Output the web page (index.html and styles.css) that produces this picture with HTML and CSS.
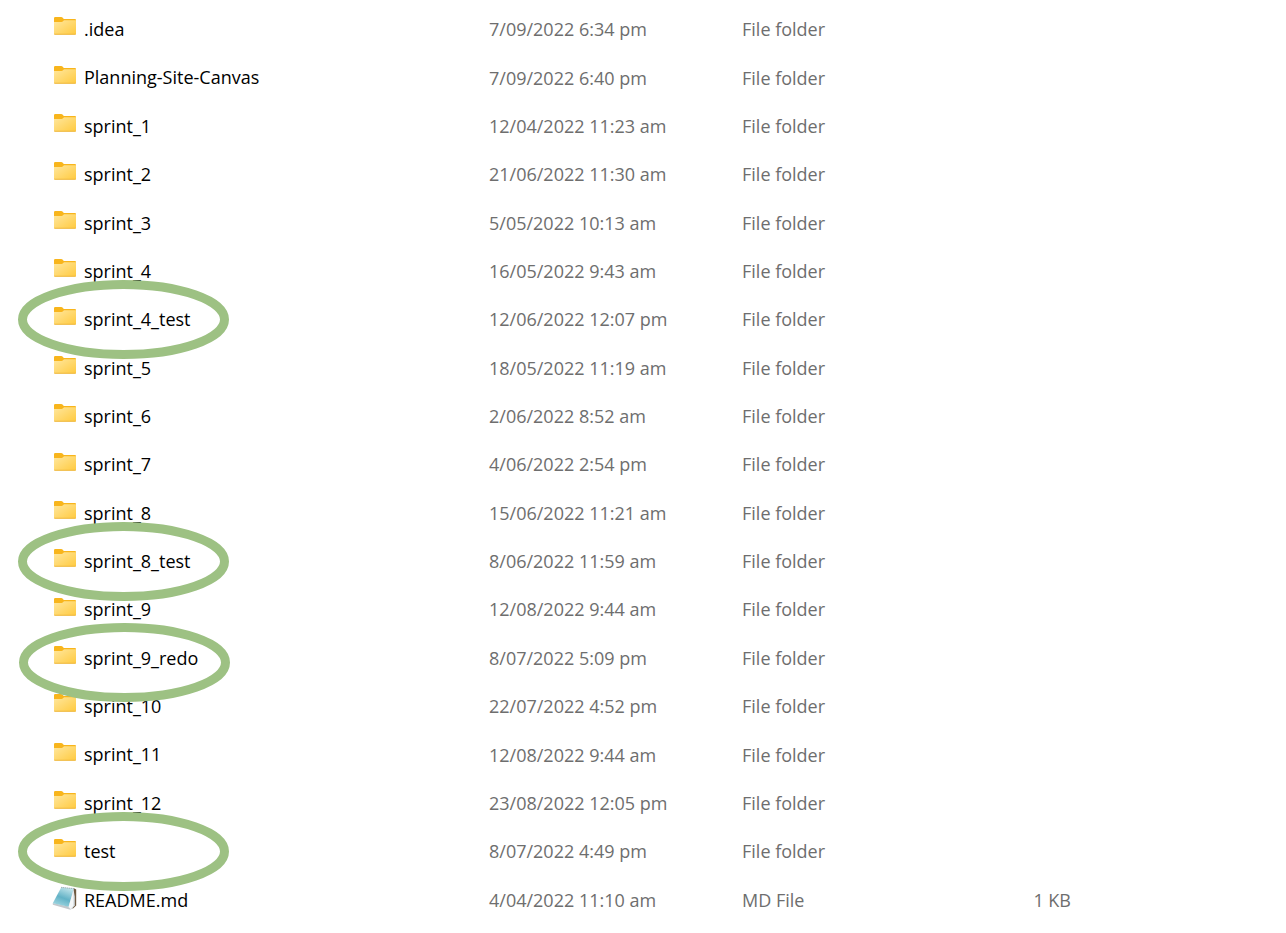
FILE: index.html
```html
<!DOCTYPE html>
<html lang="en">
<head>
<meta charset="utf-8">
<title>Files</title>
<link rel="stylesheet" href="styles.css">
</head>
<body>
<svg class="defs" aria-hidden="true">
  <defs>
    <linearGradient id="folder-front" x1="0" y1="0" x2="1" y2="1">
      <stop offset="0" stop-color="#ffe79e"/>
      <stop offset="1" stop-color="#ffca3f"/>
    </linearGradient>
    <linearGradient id="note-page" x1="0.7" y1="0" x2="0.3" y2="1">
      <stop offset="0" stop-color="#c4e6ec"/>
      <stop offset="0.55" stop-color="#62b2c6"/>
      <stop offset="1" stop-color="#a3d8e2"/>
    </linearGradient>
    <symbol id="folder" viewBox="0 0 24 24">
      <path d="M1 4.2Q1 3 2.2 3H8.3Q9 3 9.5 3.6L10.8 5H22Q23 5 23 6V12H1Z" fill="#f8b51c"/>
      <path d="M1 8H8.6Q9.4 8 10 7.3L11 6.2H23V19.8Q23 20.6 22.2 20.6H1.8Q1 20.6 1 19.8Z" fill="url(#folder-front)"/>
      <path d="M1 19.8H23Q23 20.8 22 20.8H2Q1 20.8 1 19.8Z" fill="#eeb63c"/>
    </symbol>
    <symbol id="note" viewBox="0 0 26 26">
      <path d="M21.5 3L24.2 4.5V20.5L20.5 24Z" fill="#6f5a41"/>
      <path d="M0.8 18L17 21.5L19 24.4L17.5 24.6L0.8 19.8Z" fill="#c3c8cc"/>
      <path d="M21.5 4.5L22.8 11.5V20.5L19 24.4L15.6 21.8Z" fill="#cfd6da"/>
      <path d="M9.3 2.2L21.8 3.4L16.6 21.8L0.8 18.2Z" fill="url(#note-page)"/>
      <path d="M21.6 5L21.4 21L18.6 24L16.6 21.8Z" fill="#f4f7f8"/>
      <path d="M9.3 2.4L21.8 3.6" stroke="#8c9da3" stroke-width="1" stroke-dasharray="1 1"/>
    </symbol>
    <symbol id="ring" viewBox="0 0 211 79">
      <ellipse cx="105.5" cy="39.5" rx="101" ry="35" fill="none" stroke="#9dc183" stroke-width="9"/>
    </symbol>
  </defs>
</svg>
<main class="explorer">
<table class="files" aria-label="Files">
  <colgroup><col class="col-name"><col class="col-date"><col class="col-type"><col class="col-size"><col></colgroup>
  <tbody>
    <tr><td class="name"><svg class="icon"><use href="#folder"/></svg>.idea</td><td>7/09/2022 6:34 pm</td><td>File folder</td><td class="size"></td><td></td></tr>
    <tr><td class="name"><svg class="icon"><use href="#folder"/></svg>Planning-Site-Canvas</td><td>7/09/2022 6:40 pm</td><td>File folder</td><td class="size"></td><td></td></tr>
    <tr><td class="name"><svg class="icon"><use href="#folder"/></svg>sprint_1</td><td>12/04/2022 11:23 am</td><td>File folder</td><td class="size"></td><td></td></tr>
    <tr><td class="name"><svg class="icon"><use href="#folder"/></svg>sprint_2</td><td>21/06/2022 11:30 am</td><td>File folder</td><td class="size"></td><td></td></tr>
    <tr><td class="name"><svg class="icon"><use href="#folder"/></svg>sprint_3</td><td>5/05/2022 10:13 am</td><td>File folder</td><td class="size"></td><td></td></tr>
    <tr><td class="name"><svg class="icon"><use href="#folder"/></svg>sprint_4</td><td>16/05/2022 9:43 am</td><td>File folder</td><td class="size"></td><td></td></tr>
    <tr><td class="name"><svg class="icon"><use href="#folder"/></svg>sprint_4_test<svg class="ring"><use href="#ring"/></svg></td><td>12/06/2022 12:07 pm</td><td>File folder</td><td class="size"></td><td></td></tr>
    <tr><td class="name"><svg class="icon"><use href="#folder"/></svg>sprint_5</td><td>18/05/2022 11:19 am</td><td>File folder</td><td class="size"></td><td></td></tr>
    <tr><td class="name"><svg class="icon"><use href="#folder"/></svg>sprint_6</td><td>2/06/2022 8:52 am</td><td>File folder</td><td class="size"></td><td></td></tr>
    <tr><td class="name"><svg class="icon"><use href="#folder"/></svg>sprint_7</td><td>4/06/2022 2:54 pm</td><td>File folder</td><td class="size"></td><td></td></tr>
    <tr><td class="name"><svg class="icon"><use href="#folder"/></svg>sprint_8</td><td>15/06/2022 11:21 am</td><td>File folder</td><td class="size"></td><td></td></tr>
    <tr><td class="name"><svg class="icon"><use href="#folder"/></svg>sprint_8_test<svg class="ring"><use href="#ring"/></svg></td><td>8/06/2022 11:59 am</td><td>File folder</td><td class="size"></td><td></td></tr>
    <tr><td class="name"><svg class="icon"><use href="#folder"/></svg>sprint_9</td><td>12/08/2022 9:44 am</td><td>File folder</td><td class="size"></td><td></td></tr>
    <tr><td class="name"><svg class="icon"><use href="#folder"/></svg>sprint_9_redo<svg class="ring ring-low"><use href="#ring"/></svg></td><td>8/07/2022 5:09 pm</td><td>File folder</td><td class="size"></td><td></td></tr>
    <tr><td class="name"><svg class="icon"><use href="#folder"/></svg>sprint_10</td><td>22/07/2022 4:52 pm</td><td>File folder</td><td class="size"></td><td></td></tr>
    <tr><td class="name"><svg class="icon"><use href="#folder"/></svg>sprint_11</td><td>12/08/2022 9:44 am</td><td>File folder</td><td class="size"></td><td></td></tr>
    <tr><td class="name"><svg class="icon"><use href="#folder"/></svg>sprint_12</td><td>23/08/2022 12:05 pm</td><td>File folder</td><td class="size"></td><td></td></tr>
    <tr><td class="name"><svg class="icon"><use href="#folder"/></svg>test<svg class="ring"><use href="#ring"/></svg></td><td>8/07/2022 4:49 pm</td><td>File folder</td><td class="size"></td><td></td></tr>
    <tr><td class="name"><svg class="icon icon-note"><use href="#note"/></svg>README.md</td><td>4/04/2022 11:10 am</td><td>MD File</td><td class="size">1 KB</td><td></td></tr>
  </tbody>
</table>
</main>
</body>
</html>
```
FILE: styles.css
```css
body {
  margin: 0;
  background: #fff;
  color: #6e6e6e;
  font: 18px/24px "Open Sans", "Noto Sans", sans-serif;
}

.defs {
  position: absolute;
  width: 0;
  height: 0;
}

.explorer {
  padding: 5px 0 9px;
}

.files {
  width: 100%;
  height: calc(100vh - 14px);
  table-layout: fixed;
  border-collapse: collapse;
}

.col-name { width: 489px; }
.col-date { width: 253px; }
.col-type { width: 173px; }
.col-size { width: 156px; }

td {
  padding: 0;
  vertical-align: middle;
  white-space: nowrap;
}

.name {
  position: relative;
  padding: 2px 0 0 53px;
  color: #000;
}

.size {
  text-align: right;
}

.icon {
  width: 24px;
  height: 24px;
  margin: -5px 7px 5px 0;
  vertical-align: middle;
}

.icon-note {
  width: 26px;
  height: 26px;
  margin: -5px 6px 3px -1px;
}

.ring {
  position: absolute;
  left: 18px;
  top: calc(50% - 39px);
  z-index: 1;
  width: 211px;
  height: 79px;
  pointer-events: none;
}

.ring-low {
  left: 19px;
  top: calc(50% - 35px);
}
```
